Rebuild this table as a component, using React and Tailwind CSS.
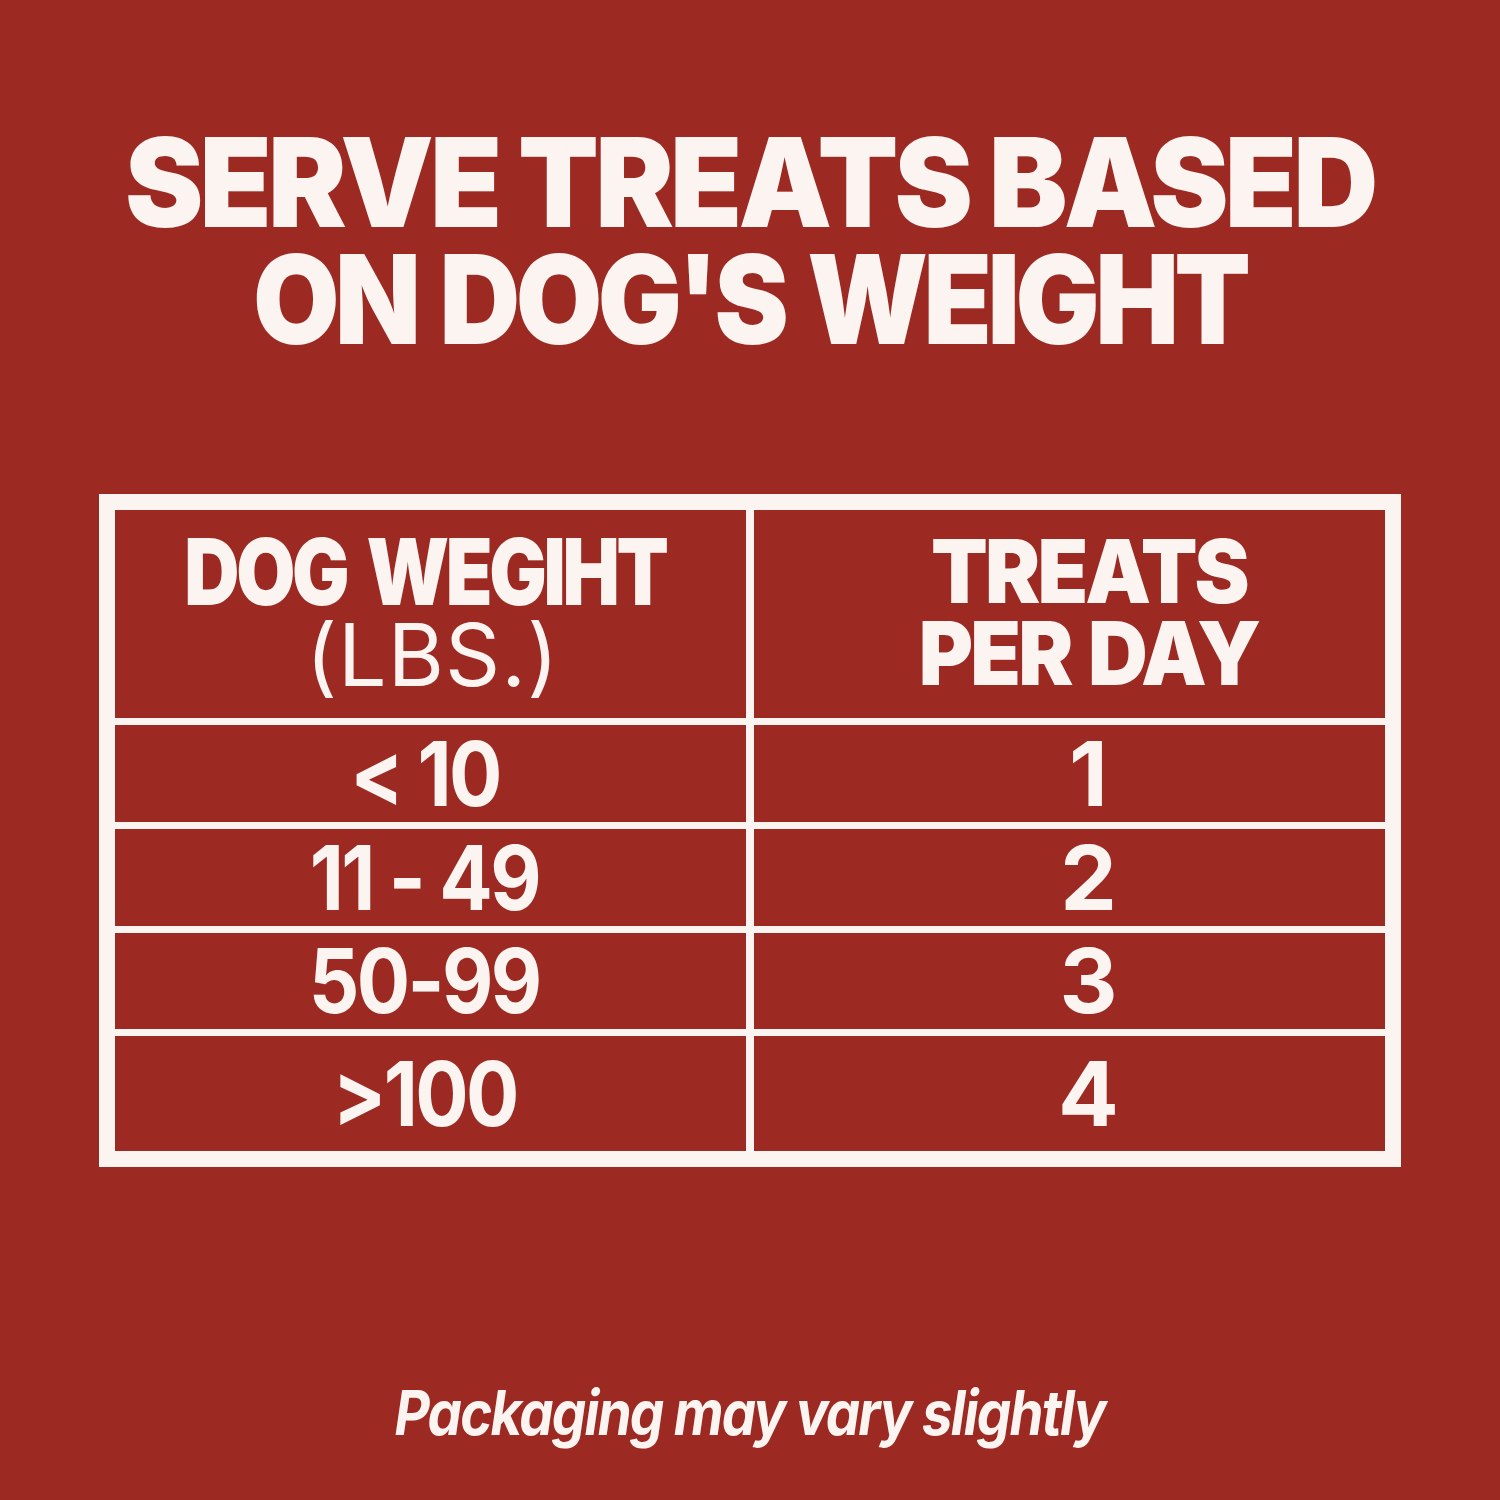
export default function App() {
  const rows = [
    ["< 10", "1"],
    ["11 - 49", "2"],
    ["50-99", "3"],
    [">100", "4"],
  ];

  return (
    <div className="w-[1500px] h-[1500px] bg-[#9c2a22] text-[#fbf4f1] font-['Inter',sans-serif] flex flex-col items-center overflow-hidden">
      {/* title */}
      <h1 className="mt-[124px] text-[124px] leading-[117px] font-black text-center">
        <span className="block tracking-[-4px] scale-x-[0.95]">SERVE TREATS BASED</span>
        <span className="block tracking-[-5px] scale-x-[0.9] [word-spacing:6px]">ON DOG'S WEIGHT</span>
      </h1>

      {/* table */}
      <div className="mt-[136px] w-[1302px] bg-[#fbf4f1] p-[16px] grid grid-cols-2 grid-rows-[208px_97px_97px_96px_115px] gap-x-[8px] gap-y-[7px]">
        <div className="bg-[#9c2a22] flex flex-col items-center justify-center pb-[4px] pr-[12px]">
          <p className="text-[92px] leading-[86px] font-black tracking-[-4px] scale-x-[0.83] [word-spacing:10px]">
            DOG WEGIHT
          </p>
          <p className="text-[86px] leading-[80px] font-normal tracking-[1px] pl-[16px]">
            (LBS.)
          </p>
        </div>
        <div className="bg-[#9c2a22] flex flex-col items-center justify-center pb-[4px] pl-[38px]">
          <p className="text-[88px] leading-[82px] font-black tracking-[-3px] scale-x-[0.94]">
            TREATS
          </p>
          <p className="text-[88px] leading-[82px] font-black tracking-[-3px] scale-x-[0.94] [word-spacing:4px]">
            PER DAY
          </p>
        </div>
        {rows.map(([weight, count]) => (
          <>
            <div
              key={weight}
              className="bg-[#9c2a22] flex items-center justify-center pr-[12px]"
            >
              <span className="text-[90px] leading-none font-bold tracking-[-3px] scale-x-[0.88]">
                {weight}
              </span>
            </div>
            <div
              key={weight + "c"}
              className="bg-[#9c2a22] flex items-center justify-center pl-[38px]"
            >
              <span className="text-[90px] leading-none font-bold">
                {count}
              </span>
            </div>
          </>
        ))}
      </div>

      <p className="mt-[215px] text-[62px] leading-none font-bold italic tracking-[-2px] scale-x-[0.88]">
        Packaging may vary slightly
      </p>
    </div>
  );
}
